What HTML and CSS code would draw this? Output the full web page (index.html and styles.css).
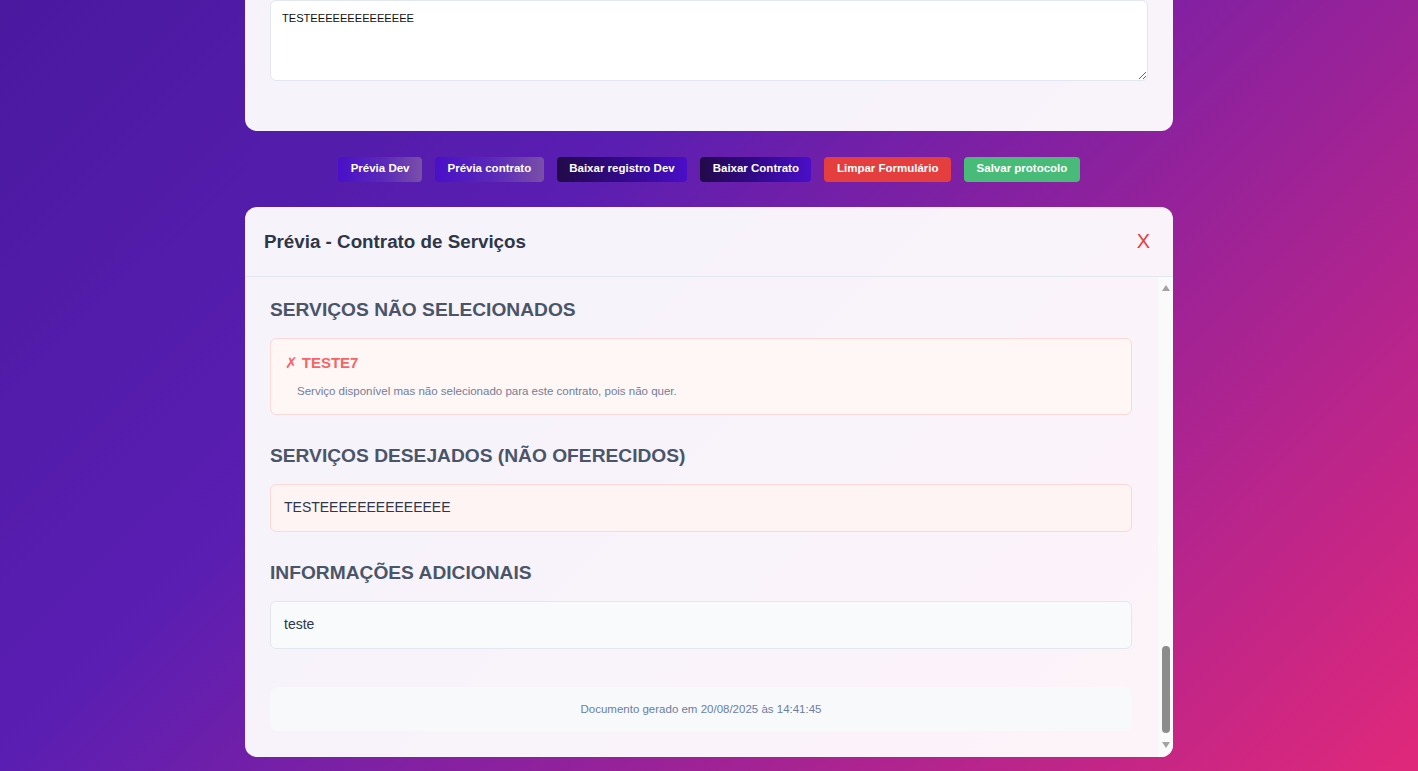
FILE: index.html
```html
<!DOCTYPE html>
<html lang="pt-BR">
<head>
<meta charset="utf-8">
<title>Prévia - Contrato de Serviços</title>
<link rel="stylesheet" href="styles.css">
</head>
<body>
<div class="page">
  <section class="form-card">
    <textarea class="notes">TESTEEEEEEEEEEEEEE</textarea>
  </section>

  <div class="actions">
    <button class="btn btn-preview">Prévia Dev</button>
    <button class="btn btn-preview">Prévia contrato</button>
    <button class="btn btn-download">Baixar registro Dev</button>
    <button class="btn btn-download">Baixar Contrato</button>
    <button class="btn btn-clear">Limpar Formulário</button>
    <button class="btn btn-save">Salvar protocolo</button>
  </div>

  <section class="modal">
    <header class="modal-header">
      <h2 class="modal-title">Prévia - Contrato de Serviços</h2>
      <button class="close">X</button>
    </header>
    <div class="modal-body">
      <div class="modal-content">
        <section class="doc-section">
          <h3 class="doc-heading">SERVIÇOS NÃO SELECIONADOS</h3>
          <div class="service-off">
            <div class="service-title"><span class="mark">✗</span> TESTE7</div>
            <p class="service-desc">Serviço disponível mas não selecionado para este contrato, pois não quer.</p>
          </div>
        </section>
        <section class="doc-section">
          <h3 class="doc-heading">SERVIÇOS DESEJADOS (NÃO OFERECIDOS)</h3>
          <div class="box box-warn">TESTEEEEEEEEEEEEEE</div>
        </section>
        <section class="doc-section">
          <h3 class="doc-heading">INFORMAÇÕES ADICIONAIS</h3>
          <div class="box box-info">teste</div>
        </section>
        <div class="doc-footer">Documento gerado em 20/08/2025 às 14:41:45</div>
      </div>
      <div class="scrollbar">
        <div class="sb-btn sb-up"><span class="tri tri-up"></span></div>
        <div class="sb-track"><div class="sb-thumb"></div></div>
        <div class="sb-btn sb-down"><span class="tri tri-down"></span></div>
      </div>
    </div>
  </section>
</div>
</body>
</html>
```

FILE: styles.css
```css
* { box-sizing: border-box; }

html, body {
  margin: 0;
  height: 771px;
  overflow: hidden;
}

body {
  font-family: "Liberation Sans", Arial, sans-serif;
  background: linear-gradient(135deg, #4a19a0 0%, #5a1eb2 35%, #9a2298 65%, #e0287a 100%);
}

.page {
  width: 928px;
  margin: 0 auto;
  display: flex;
  flex-direction: column;
}

.form-card {
  background: rgba(255, 255, 255, 0.95);
  border-radius: 0 0 12px 12px;
  padding: 0 25px 50px;
}

.notes {
  display: block;
  width: 100%;
  height: 81px;
  border: 1px solid #e2e8f0;
  border-radius: 6px;
  background: #fff;
  padding: 11px 11px 9px;
  font-family: "Liberation Sans", Arial, sans-serif;
  font-size: 11.1px;
  color: #111;
  resize: vertical;
}

.actions {
  display: flex;
  justify-content: center;
  gap: 13px;
  margin: 26px 0 25px;
}

.btn {
  border: none;
  border-radius: 4px;
  height: 25px;
  padding: 0 12.5px 3px;
  font-family: "Liberation Sans", Arial, sans-serif;
  font-weight: bold;
  font-size: 11.5px;
  line-height: 13px;
  color: #fff;
  cursor: pointer;
}

.btn-preview { background: linear-gradient(90deg, #4a0fc8 0%, #5a2ab8 55%, #7a4fa8 100%); }
.btn-download { background: linear-gradient(90deg, #220a48 0%, #32098a 50%, #4a0ec8 100%); }
.btn-clear { background: #e53e3e; }
.btn-save { background: #48bb78; }

.modal {
  background: rgba(255, 255, 255, 0.95);
  border-radius: 12px;
  overflow: hidden;
  height: 550px;
  display: flex;
  flex-direction: column;
}

.modal-header {
  display: flex;
  align-items: center;
  justify-content: space-between;
  height: 70px;
  padding: 0 23px 0 20px;
  border-bottom: 1px solid #e2e8f0;
  flex: none;
}

.modal-title {
  margin: 0 0 0 -1px;
  padding-top: 1px;
  font-size: 18.8px;
  font-weight: bold;
  color: #2d3748;
}

.close {
  border: none;
  background: none;
  padding: 0;
  font-family: "Liberation Sans", Arial, sans-serif;
  font-size: 20px;
  color: #e53e3e;
  cursor: pointer;
}

.modal-body {
  flex: 1;
  display: flex;
  min-height: 0;
}

.modal-content {
  flex: 1;
  padding: 21px 26px 26px 25px;
  display: flex;
  flex-direction: column;
  justify-content: flex-end;
  overflow: hidden;
}

.doc-section { margin-bottom: 29px; }
.doc-section:nth-last-child(2) { margin-bottom: 38px; }

.doc-heading {
  margin: 0 0 17px;
  font-size: 19.2px;
  line-height: 23px;
  font-weight: bold;
  color: #4a5568;
}

.service-off {
  background: #fff6f6;
  border: 1px solid #fed7d7;
  border-radius: 6px;
  padding: 15px 14px 16px 14px;
}

.service-title {
  font-size: 15px;
  line-height: 18px;
  font-weight: bold;
  color: #f56565;
  margin-bottom: 12px;
}

.mark {
  font-family: "DejaVu Sans", sans-serif;
  font-weight: normal;
}

.service-desc {
  margin: 0;
  padding-left: 12px;
  font-size: 11.5px;
  line-height: 14px;
  color: #718096;
}

.box {
  border-radius: 6px;
  padding: 15px 13px 16px;
  font-size: 14px;
  line-height: 15px;
  color: #2d3748;
}

.box-warn { background: #fff4f4; border: 1px solid #fed7d7; }
.box-info { background: #f8fafc; border: 1px solid #e2e8f0; }

.doc-footer {
  background: #f7f9fb;
  border-radius: 8px;
  height: 44px;
  display: flex;
  align-items: center;
  justify-content: center;
  font-size: 11.5px;
  color: #6b7fa0;
}

.scrollbar {
  width: 15px;
  flex: none;
  background: #fafafa;
  display: flex;
  flex-direction: column;
}

.sb-btn {
  height: 20px;
  display: flex;
  justify-content: center;
  flex: none;
}
.sb-up { align-items: flex-start; padding-top: 8px; }
.sb-down { align-items: flex-start; padding-top: 5px; }

.tri {
  width: 0;
  height: 0;
  border-left: 4px solid transparent;
  border-right: 4px solid transparent;
}
.tri-up { border-bottom: 6px solid #a3a3a3; }
.tri-down { border-top: 6px solid #a3a3a3; }

.sb-track {
  flex: 1;
  display: flex;
  flex-direction: column;
  justify-content: flex-end;
  align-items: center;
  padding-bottom: 4px;
}

.sb-thumb {
  width: 8px;
  height: 87px;
  border-radius: 4px;
  background: #8c8c8c;
}
```
